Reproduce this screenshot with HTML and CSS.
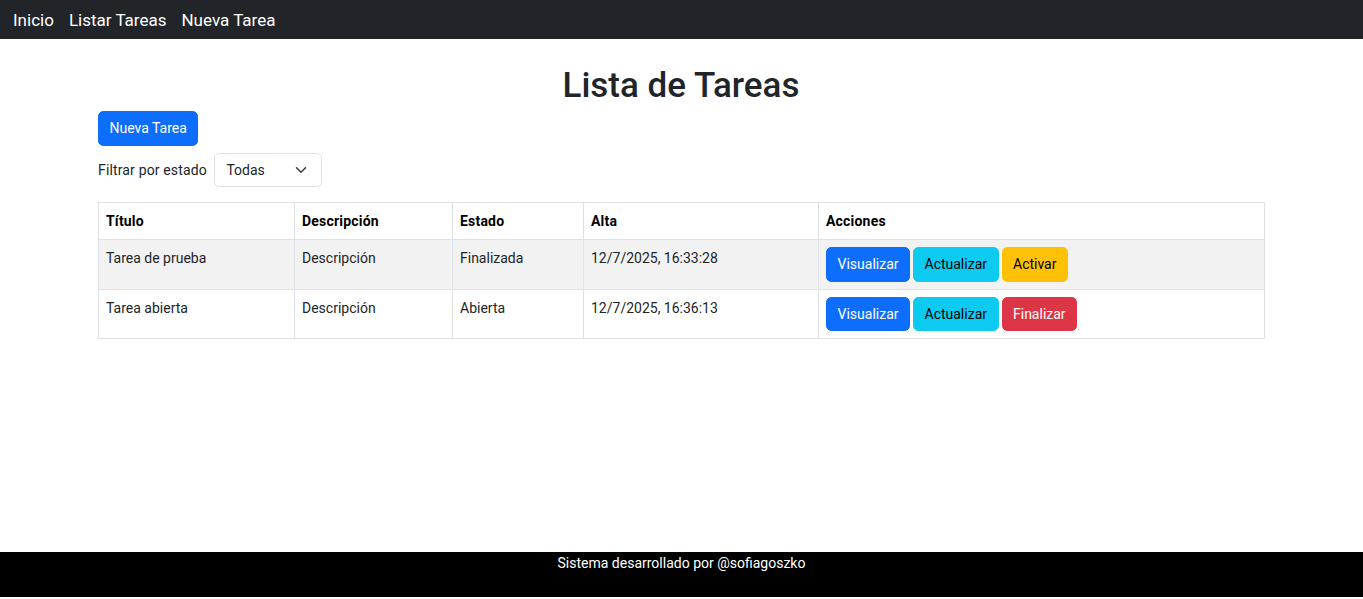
FILE: index.html
```html
<!DOCTYPE html>
<html lang="es">
<head>
<meta charset="utf-8">
<title>Lista de Tareas</title>
<link rel="stylesheet" href="styles.css">
</head>
<body>
<nav class="topbar">
  <a class="nav-link" href="#">Inicio</a>
  <a class="nav-link" href="#">Listar Tareas</a>
  <a class="nav-link" href="#">Nueva Tarea</a>
</nav>
<main class="page">
  <h1 class="title">Lista de Tareas</h1>
  <div class="actions-top">
    <a class="btn btn-primary" href="#">Nueva Tarea</a>
  </div>
  <div class="filter">
    <label class="filter-label">Filtrar por estado</label>
    <div class="select">
      <span>Todas</span>
      <svg class="chevron" width="16" height="12" viewBox="0 0 16 16"><path d="m2 5 6 6 6-6" fill="none" stroke="#343a40" stroke-width="2" stroke-linecap="round" stroke-linejoin="round"/></svg>
    </div>
  </div>
  <table class="tasks">
    <colgroup>
      <col class="c1"><col class="c2"><col class="c3"><col class="c4"><col class="c5">
    </colgroup>
    <thead>
      <tr><th>Título</th><th>Descripción</th><th>Estado</th><th>Alta</th><th>Acciones</th></tr>
    </thead>
    <tbody>
      <tr class="striped">
        <td>Tarea de prueba</td><td>Descripción</td><td>Finalizada</td><td>12/7/2025, 16:33:28</td>
        <td><div class="row-actions"><a class="btn btn-sm btn-primary" href="#">Visualizar</a><a class="btn btn-sm btn-info" href="#">Actualizar</a><a class="btn btn-sm btn-warning" href="#">Activar</a></div></td>
      </tr>
      <tr>
        <td>Tarea abierta</td><td>Descripción</td><td>Abierta</td><td>12/7/2025, 16:36:13</td>
        <td><div class="row-actions"><a class="btn btn-sm btn-primary" href="#">Visualizar</a><a class="btn btn-sm btn-info" href="#">Actualizar</a><a class="btn btn-sm btn-danger" href="#">Finalizar</a></div></td>
      </tr>
    </tbody>
  </table>
</main>
<footer class="footer">Sistema desarrollado por @sofiagoszko</footer>
</body>
</html>
```
FILE: styles.css
```css
html { background: #dfe6ee; }
body {
  margin: 0;
  min-height: 599px;
  display: flex;
  flex-direction: column;
  background: #fff;
  font-family: Roboto, "Liberation Sans", sans-serif;
  font-size: 14px;
  line-height: 21px;
  color: #212529;
}
.topbar {
  height: 39px;
  background: #212529;
  display: flex;
  align-items: center;
  padding-left: 13px;
  gap: 15px;
}
.nav-link {
  color: #fff;
  text-decoration: none;
  font-size: 17px;
  line-height: 28px;
}
.page {
  flex: 1;
  width: 1166px;
  padding-right: 1px;
  margin: 0 auto;
}
.title {
  margin: 26px 0 4px;
  font-size: 35px;
  line-height: 42px;
  font-weight: 500;
  text-align: center;
  color: #212529;
}
.actions-top { display: flex; margin-bottom: 7px; }
.btn {
  display: inline-block;
  padding: 6px 10.5px;
  border: 1px solid transparent;
  border-radius: 5.25px;
  font-size: 14px;
  line-height: 21px;
  text-decoration: none;
}
.btn-sm { padding: 6px 10.5px 5.5px; }
.btn-primary { background: #0d6efd; border-color: #0d6efd; color: #fff; }
.btn-info { background: #0dcaf0; border-color: #0dcaf0; color: #000; }
.btn-warning { background: #ffc107; border-color: #ffc107; color: #000; }
.btn-danger { background: #dc3545; border-color: #dc3545; color: #fff; }
.filter {
  display: flex;
  align-items: center;
  gap: 7px;
  margin-bottom: 15px;
}
.filter-label { letter-spacing: 0.15px; }
.select {
  width: 108px;
  box-sizing: border-box;
  height: 34px;
  display: flex;
  align-items: center;
  justify-content: space-between;
  padding: 0 12px 0 11.5px;
  border: 1px solid #dee2e6;
  border-radius: 5.25px;
}
.tasks {
  width: 100%;
  table-layout: fixed;
  border-collapse: collapse;
  border: 1px solid #dee2e6;
}
.c1 { width: 196px; }
.c2 { width: 158px; }
.c3 { width: 131px; }
.c4 { width: 235px; }
.c5 { width: 446px; }
.tasks th, .tasks td {
  border: 1px solid #dee2e6;
  padding: 8px 7px 7px;
  text-align: left;
  vertical-align: top;
}
.tasks th { font-weight: 700; color: #000; letter-spacing: 0.2px; }
.striped td { background: #f2f2f2; }
.row-actions { display: flex; gap: 3px; margin-top: -1px; }
.footer {
  height: 45px;
  background: #000;
  color: #fff;
  text-align: center;
  line-height: 22px;
  margin-bottom: 2px;
}
```
